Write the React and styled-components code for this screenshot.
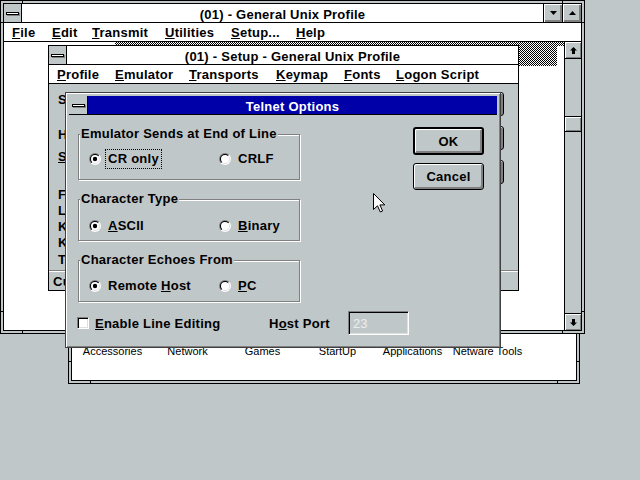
import React from 'react';
import styled, { createGlobalStyle } from 'styled-components';

const GRAY = '#c0c7c8';
const DARK = '#808080';
const BLUE = '#0000a8';
const FONT = `"Liberation Sans", Arial, sans-serif`;

const Global = createGlobalStyle`
  html, body { margin: 0; padding: 0; background: ${GRAY}; }
  body { width: 640px; height: 480px; overflow: hidden; }
  #root { width: 640px; height: 480px; }
  u { text-decoration: underline; text-decoration-thickness: 1px; text-underline-offset: 1px; }
`;

const Desktop = styled.div`
  position: relative;
  width: 640px;
  height: 480px;
  overflow: hidden;
  background: ${GRAY};
  font-family: ${FONT};
  font-size: 13px;
  font-weight: 700;
  letter-spacing: 0.25px;
  color: #000;
`;

const notches = `
  linear-gradient(to right, transparent 21px, #000 21px, #000 22px, transparent 22px),
  linear-gradient(to left, transparent 21px, #000 21px, #000 22px, transparent 22px),
  linear-gradient(to bottom, transparent 21px, #000 21px, #000 22px, transparent 22px),
  linear-gradient(to top, transparent 21px, #000 21px, #000 22px, transparent 22px)
`;

const SizingFrame = styled.div`
  position: absolute;
  left: ${(p) => p.$x}px;
  top: ${(p) => p.$y}px;
  width: ${(p) => p.$w}px;
  height: ${(p) => p.$h}px;
  box-sizing: border-box;
  border: 1px solid #000;
  padding: 2px;
  background: ${notches}, ${GRAY};
  display: flex;
`;

const FrameInner = styled.div`
  flex: 1;
  min-width: 0;
  border: 1px solid #000;
  background: #fff;
  display: flex;
  flex-direction: column;
  overflow: hidden;
`;

const PlainWindow = styled.div`
  position: absolute;
  left: ${(p) => p.$x}px;
  top: ${(p) => p.$y}px;
  width: ${(p) => p.$w}px;
  height: ${(p) => p.$h}px;
  box-sizing: border-box;
  border: 1px solid #000;
  background: #fff;
  display: flex;
  flex-direction: column;
  overflow: hidden;
`;

const Dialog = styled.div`
  position: absolute;
  left: 65px;
  top: 92px;
  width: 436px;
  height: 256px;
  box-sizing: border-box;
  border: 1px solid #404040;
  padding: 3px;
  background: ${GRAY};
  box-shadow: inset 1px 1px 0 #fff, inset -1px -1px 0 ${DARK};
  display: flex;
  flex-direction: column;
  overflow: hidden;
`;

const TitleBar = styled.div`
  display: flex;
  flex-shrink: 0;
  height: 18px;
  border-bottom: 1px solid #000;
`;

const SysBox = styled.div`
  width: ${(p) => p.$w}px;
  flex-shrink: 0;
  border-right: 1px solid #000;
  background: ${GRAY};
  display: flex;
  align-items: center;
  justify-content: center;
`;

const SysDash = styled.span`
  display: block;
  width: 11px;
  height: 1px;
  border: 1px solid #000;
  background: #fff;
  box-shadow: 1px 1px 0 ${DARK};
`;

const Caption = styled.div`
  flex: 1;
  min-width: 0;
  box-sizing: border-box;
  display: flex;
  align-items: center;
  justify-content: center;
  padding-top: ${(p) => (p.$active ? 2 : 3)}px;
  line-height: 15px;
  white-space: nowrap;
  background: ${(p) => (p.$active ? BLUE : '#fff')};
  color: ${(p) => (p.$active ? '#fff' : '#000')};
`;

const CapBtn = styled.div`
  width: 18px;
  flex-shrink: 0;
  border-left: 1px solid #000;
  background: ${GRAY};
  box-shadow: inset 1px 1px 0 #fff, inset -2px -2px 0 ${DARK};
  display: flex;
  align-items: center;
  justify-content: center;
`;

const MenuBar = styled.div`
  display: flex;
  flex-shrink: 0;
  align-items: center;
  box-sizing: border-box;
  height: 19px;
  padding-top: 1px;
  padding-left: ${(p) => p.$pad}px;
  border-bottom: 1px solid #000;
  background: #fff;
  line-height: 17px;
  white-space: nowrap;
`;

const MenuItem = styled.span`
  flex-shrink: 0;
  width: ${(p) => (p.$w ? `${p.$w}px` : 'auto')};
`;

const ClientRow = styled.div`
  flex: 1;
  display: flex;
  min-height: 0;
`;

const WhiteClient = styled.div`
  position: relative;
  flex: 1;
  background: #fff;
`;

const Dither = styled.div`
  position: absolute;
  top: 0;
  left: ${(p) => p.$l}px;
  width: ${(p) => (p.$w ? `${p.$w}px` : 'auto')};
  right: ${(p) => (p.$w ? 'auto' : '0')};
  height: ${(p) => p.$h}px;
  background: repeating-conic-gradient(#000 0 25%, #fff 0 50%) 0 0 / 2px 2px;
`;

const VScroll = styled.div`
  width: 16px;
  flex-shrink: 0;
  border-left: 1px solid #000;
  background: ${GRAY};
  display: flex;
  flex-direction: column;
`;

const ScrollBtn = styled.div`
  height: 16px;
  flex-shrink: 0;
  border-top: ${(p) => (p.$bottom ? '1px solid #000' : 'none')};
  border-bottom: ${(p) => (p.$bottom ? 'none' : '1px solid #000')};
  background: ${GRAY};
  box-shadow: inset 1px 1px 0 #fff, inset -1px -1px 0 ${DARK};
  display: flex;
  align-items: center;
  justify-content: center;
`;

const Track = styled.div`
  flex: 1;
  display: flex;
  flex-direction: column;
`;

const Thumb = styled.div`
  margin-top: 57px;
  height: 14px;
  border-top: 1px solid #000;
  border-bottom: 1px solid #000;
  background: ${GRAY};
  box-shadow: inset 1px 1px 0 #fff, inset -1px -1px 0 ${DARK};
`;

/* Setup window client */
const GrayClient = styled.div`
  flex: 1;
  display: flex;
  flex-direction: column;
  background: ${GRAY};
  min-height: 0;
`;

const FieldsArea = styled.div`
  flex: 1;
  display: flex;
  min-height: 0;
`;

const LabelsCol = styled.div`
  display: flex;
  flex-direction: column;
  padding-left: 9px;
`;

const FieldLabel = styled.div`
  line-height: 16px;
  margin-top: ${(p) => p.$mt}px;
  white-space: nowrap;
`;

const SetupBtnCol = styled.div`
  margin-left: auto;
  margin-right: 14px;
  padding-top: 8px;
  display: flex;
  flex-direction: column;
  gap: 10px;
`;

const SetupBtn = styled.div`
  width: 74px;
  height: 24px;
  box-sizing: border-box;
  border: 1px solid #000;
  border-radius: 3px;
  background: ${GRAY};
  box-shadow: inset 1px 1px 0 #fff, inset -2px -2px 0 ${DARK};
`;

const StatusBar = styled.div`
  height: 19px;
  flex-shrink: 0;
  border-top: 1px solid ${DARK};
  box-shadow: inset 0 1px 0 #fff;
  padding-left: 4px;
  line-height: 21px;
  white-space: nowrap;
`;

/* Dialog */
const DialogBody = styled.div`
  flex: 1;
  display: flex;
  flex-direction: column;
  padding: 12px 0 0 9px;
`;

const TopRow = styled.div`
  display: flex;
  align-items: flex-start;
`;

const Groups = styled.div`
  width: 222px;
  margin-top: 7px;
  display: flex;
  flex-direction: column;
  gap: 19px;
`;

const GroupBox = styled.div`
  position: relative;
  box-sizing: border-box;
  height: ${(p) => p.$h}px;
  border: 1px solid ${DARK};
  box-shadow: 1px 1px 0 #fff, inset 1px 1px 0 #fff;
`;

const GroupLabel = styled.span`
  position: absolute;
  top: -8px;
  left: 1px;
  padding: 0 1px;
  line-height: 14px;
  background: ${GRAY};
  white-space: nowrap;
`;

const RadioRow = styled.div`
  display: grid;
  grid-template-columns: 130px auto;
  align-items: center;
  padding: ${(p) => p.$pt}px 0 0 10px;
`;

const OptionItem = styled.div`
  display: flex;
  align-items: center;
  gap: 4px;
`;

const OptionText = styled.span`
  padding: 2px;
  line-height: 14px;
  border: 1px dotted ${(p) => (p.$focus ? '#000' : 'transparent')};
  white-space: nowrap;
`;

const RadioSvg = styled.svg`
  display: block;
  flex-shrink: 0;
`;

const ButtonCol = styled.div`
  margin-left: 113px;
  display: flex;
  flex-direction: column;
  gap: 8px;
`;

const PushButton = styled.div`
  width: 71px;
  height: ${(p) => p.$h}px;
  box-sizing: border-box;
  border: ${(p) => (p.$default ? 2 : 1)}px solid #000;
  border-radius: 3px;
  background: ${GRAY};
  box-shadow: inset 1px 1px 0 #fff, inset -2px -2px 0 ${DARK};
  display: flex;
  align-items: center;
  justify-content: center;
`;

const BottomRow = styled.div`
  display: flex;
  align-items: center;
  height: 24px;
  margin-top: 9px;
  margin-left: -1px;
`;

const CheckItem = styled.div`
  width: 192px;
  display: flex;
  align-items: center;
  gap: 6px;
  white-space: nowrap;
`;

const CheckBox = styled.span`
  display: block;
  width: 10px;
  height: 10px;
  border: 1px solid;
  border-color: ${DARK} #fff #fff ${DARK};
  box-shadow: inset 1px 1px 0 #000, inset -1px -1px 0 #dfdfdf;
  background: #fff;
`;

const FieldCaption = styled.span`
  width: 79px;
  white-space: nowrap;
`;

const EditBox = styled.div`
  width: 61px;
  height: 24px;
  box-sizing: border-box;
  border: 1px solid;
  border-color: ${DARK} #fff #fff ${DARK};
  box-shadow: inset 1px 1px 0 #000, inset -1px -1px 0 #dfdfdf;
  background: ${GRAY};
  color: #eceeee;
  font-weight: 400;
  letter-spacing: 0;
  padding-left: 4px;
  display: flex;
  align-items: center;
`;

/* Program group window */
const IconRow = styled.div`
  display: grid;
  grid-template-columns: repeat(6, 75px);
  padding: 51px 0 0 3px;
  font-size: 11px;
  font-weight: 400;
  letter-spacing: 0;
  line-height: 13px;
`;

const IconLabel = styled.span`
  text-align: center;
  white-space: nowrap;
`;

const Pointer = styled.svg`
  position: absolute;
  left: 373px;
  top: 193px;
  display: block;
`;

function Tri({ dir }) {
  return (
    <svg width="7" height="4" viewBox="0 0 7 4" style={{ display: 'block' }}>
      <polygon points={dir === 'down' ? '0,0 7,0 3.5,4' : '3.5,0 7,4 0,4'} fill="#000" />
    </svg>
  );
}

function Arrow({ dir }) {
  return (
    <svg width="7" height="7" viewBox="0 0 7 7" style={{ display: 'block', transform: dir === 'down' ? 'rotate(180deg)' : 'none' }}>
      <path d="M3.5 0 L7 3.5 H5 V7 H2 V3.5 H0 Z" fill="#000" />
    </svg>
  );
}

function Radio({ checked }) {
  const raw = React.useId();
  const id = 'r' + raw.replace(/[^a-zA-Z0-9]/g, '');
  return (
    <RadioSvg width="12" height="12" viewBox="0 0 12 12">
      <defs>
        <linearGradient id={id + 'o'} x1="0" y1="0" x2="1" y2="1">
          <stop offset="0.5" stopColor={DARK} />
          <stop offset="0.5" stopColor="#ffffff" />
        </linearGradient>
        <linearGradient id={id + 'i'} x1="0" y1="0" x2="1" y2="1">
          <stop offset="0.5" stopColor="#000000" />
          <stop offset="0.5" stopColor="#dfdfdf" />
        </linearGradient>
      </defs>
      <circle cx="6" cy="6" r="6" fill={`url(#${id}o)`} />
      <circle cx="6" cy="6" r="5" fill={`url(#${id}i)`} />
      <circle cx="6" cy="6" r="4" fill="#fff" />
      {checked && <circle cx="6" cy="6" r="2.2" fill="#000" />}
    </RadioSvg>
  );
}

function Option({ checked, focus, children }) {
  return (
    <OptionItem>
      <Radio checked={checked} />
      <OptionText $focus={focus}>{children}</OptionText>
    </OptionItem>
  );
}

export default function App() {
  return (
    <>
      <Global />
      <Desktop>
        {/* Program Manager group (behind) */}
        <SizingFrame $x={68} $y={290} $w={512} $h={94}>
          <FrameInner>
            <IconRow>
              <IconLabel>Accessories</IconLabel>
              <IconLabel>Network</IconLabel>
              <IconLabel>Games</IconLabel>
              <IconLabel>StartUp</IconLabel>
              <IconLabel>Applications</IconLabel>
              <IconLabel>Netware Tools</IconLabel>
            </IconRow>
          </FrameInner>
        </SizingFrame>

        {/* Main terminal window */}
        <SizingFrame $x={0} $y={0} $w={585} $h={334}>
          <FrameInner>
            <TitleBar>
              <SysBox $w={17}><SysDash /></SysBox>
              <Caption>(01) - General Unix Profile</Caption>
              <CapBtn><Tri dir="down" /></CapBtn>
              <CapBtn><Tri dir="up" /></CapBtn>
            </TitleBar>
            <MenuBar $pad={8}>
              <MenuItem $w={40}><u>F</u>ile</MenuItem>
              <MenuItem $w={40}><u>E</u>dit</MenuItem>
              <MenuItem $w={73}><u>T</u>ransmit</MenuItem>
              <MenuItem $w={66}><u>U</u>tilities</MenuItem>
              <MenuItem $w={65}><u>S</u>etup...</MenuItem>
              <MenuItem><u>H</u>elp</MenuItem>
            </MenuBar>
            <ClientRow>
              <WhiteClient>
                <Dither $l={111} $h={4} />
                <Dither $l={515} $w={38} $h={24} />
              </WhiteClient>
              <VScroll>
                <ScrollBtn><Arrow dir="up" /></ScrollBtn>
                <Track><Thumb /></Track>
                <ScrollBtn $bottom><Arrow dir="down" /></ScrollBtn>
              </VScroll>
            </ClientRow>
          </FrameInner>
        </SizingFrame>

        {/* Setup window */}
        <PlainWindow $x={48} $y={45} $w={471} $h={246}>
          <TitleBar>
            <SysBox $w={17}><SysDash /></SysBox>
            <Caption>(01) - Setup - General Unix Profile</Caption>
          </TitleBar>
          <MenuBar $pad={8}>
            <MenuItem $w={58}><u>P</u>rofile</MenuItem>
            <MenuItem $w={74}><u>E</u>mulator</MenuItem>
            <MenuItem $w={87}><u>T</u>ransports</MenuItem>
            <MenuItem $w={68}><u>K</u>eymap</MenuItem>
            <MenuItem $w={52}><u>F</u>onts</MenuItem>
            <MenuItem><u>L</u>ogon Script</MenuItem>
          </MenuBar>
          <GrayClient>
            <FieldsArea>
              <LabelsCol>
                <FieldLabel $mt={8}>Session:</FieldLabel>
                <FieldLabel $mt={19}>Host:</FieldLabel>
                <FieldLabel $mt={6}><u>S</u>ettings</FieldLabel>
                <FieldLabel $mt={22}>Font:</FieldLabel>
                <FieldLabel $mt={0}>Logon:</FieldLabel>
                <FieldLabel $mt={0}>Keymap:</FieldLabel>
                <FieldLabel $mt={0}>Keys:</FieldLabel>
                <FieldLabel $mt={1}>Type:</FieldLabel>
              </LabelsCol>
              <SetupBtnCol>
                <SetupBtn />
                <SetupBtn />
                <SetupBtn />
              </SetupBtnCol>
            </FieldsArea>
            <StatusBar>Current</StatusBar>
          </GrayClient>
        </PlainWindow>

        {/* Telnet Options dialog */}
        <Dialog>
          <TitleBar>
            <SysBox $w={18}><SysDash /></SysBox>
            <Caption $active>Telnet Options</Caption>
          </TitleBar>
          <DialogBody>
            <TopRow>
              <Groups>
                <GroupBox $h={46}>
                  <GroupLabel>Emulator Sends at End of Line</GroupLabel>
                  <RadioRow $pt={14}>
                    <Option checked focus>CR only</Option>
                    <Option>CRLF</Option>
                  </RadioRow>
                </GroupBox>
                <GroupBox $h={42}>
                  <GroupLabel>Character Type</GroupLabel>
                  <RadioRow $pt={16}>
                    <Option checked><u>A</u>SCII</Option>
                    <Option><u>B</u>inary</Option>
                  </RadioRow>
                </GroupBox>
                <GroupBox $h={42}>
                  <GroupLabel>Character Echoes From</GroupLabel>
                  <RadioRow $pt={15}>
                    <Option checked>Remote <u>H</u>ost</Option>
                    <Option><u>P</u>C</Option>
                  </RadioRow>
                </GroupBox>
              </Groups>
              <ButtonCol>
                <PushButton $default $h={28}>OK</PushButton>
                <PushButton $h={27}>Cancel</PushButton>
              </ButtonCol>
            </TopRow>
            <BottomRow>
              <CheckItem>
                <CheckBox />
                <span><u>E</u>nable Line Editing</span>
              </CheckItem>
              <FieldCaption>H<u>o</u>st Port</FieldCaption>
              <EditBox>23</EditBox>
            </BottomRow>
          </DialogBody>
        </Dialog>

        {/* Mouse pointer */}
        <Pointer width="13" height="20" viewBox="0 0 13 20">
          <polygon
            points="0.5,0.5 0.5,16.5 4.5,12.8 7.3,19 9.6,18 6.9,11.9 11.8,11.9"
            fill="#fff"
            stroke="#000"
            strokeWidth="1"
            strokeLinejoin="miter"
          />
        </Pointer>
      </Desktop>
    </>
  );
}
